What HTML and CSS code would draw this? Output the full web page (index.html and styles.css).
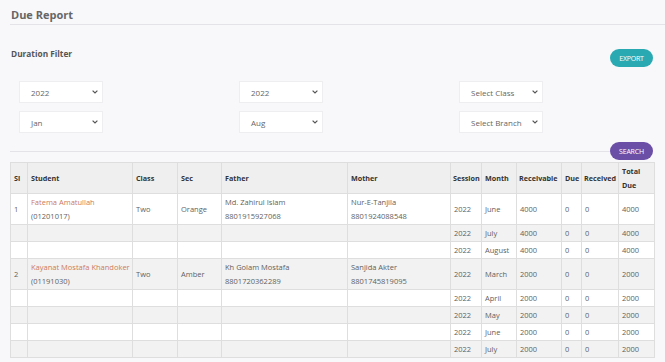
FILE: index.html
```html
<!DOCTYPE html>
<html>
<head>
<meta charset="utf-8">
<link rel="stylesheet" href="styles.css">
</head>
<body>
<div class="page">
  <div class="page-head">Due Report</div>
  <div class="filter-bar">
    <div class="filter-label">Duration Filter</div>
    <button class="btn btn-export">EXPORT</button>
  </div>
  <div class="filters">
    <div class="select"><span>2022</span><svg width="6" height="4" viewBox="0 0 6 4"><path d="M0.6 0.6 L3 3 L5.4 0.6" fill="none" stroke="#555" stroke-width="1.2"/></svg></div>
    <div class="select"><span>2022</span><svg width="6" height="4" viewBox="0 0 6 4"><path d="M0.6 0.6 L3 3 L5.4 0.6" fill="none" stroke="#555" stroke-width="1.2"/></svg></div>
    <div class="select"><span>Select Class</span><svg width="6" height="4" viewBox="0 0 6 4"><path d="M0.6 0.6 L3 3 L5.4 0.6" fill="none" stroke="#555" stroke-width="1.2"/></svg></div>
    <div class="select"><span>Jan</span><svg width="6" height="4" viewBox="0 0 6 4"><path d="M0.6 0.6 L3 3 L5.4 0.6" fill="none" stroke="#555" stroke-width="1.2"/></svg></div>
    <div class="select"><span>Aug</span><svg width="6" height="4" viewBox="0 0 6 4"><path d="M0.6 0.6 L3 3 L5.4 0.6" fill="none" stroke="#555" stroke-width="1.2"/></svg></div>
    <div class="select"><span>Select Branch</span><svg width="6" height="4" viewBox="0 0 6 4"><path d="M0.6 0.6 L3 3 L5.4 0.6" fill="none" stroke="#555" stroke-width="1.2"/></svg></div>
  </div>
  <div class="search-row">
    <div class="divider"></div>
    <button class="btn btn-search">SEARCH</button>
  </div>
  <table class="report">
    <colgroup>
      <col style="width:17px"><col style="width:105px"><col style="width:45px"><col style="width:44px">
      <col style="width:126px"><col style="width:103px"><col style="width:31px"><col style="width:35px">
      <col style="width:45px"><col style="width:20px"><col style="width:37px"><col style="width:36px">
    </colgroup>
    <thead>
      <tr><th>Sl</th><th>Student</th><th>Class</th><th>Sec</th><th>Father</th><th>Mother</th><th class="tight">Session</th><th>Month</th><th class="tight">Receivable</th><th>Due</th><th class="tight">Received</th><th>Total Due</th></tr>
    </thead>
    <tbody>
      <tr><td>1</td><td><span class="name">Fatema Amatullah</span><br>(01201017)</td><td>Two</td><td>Orange</td><td>Md. Zahirul Islam<br>8801915927068</td><td>Nur-E-Tanjila<br>8801924088548</td><td>2022</td><td>June</td><td>4000</td><td>0</td><td>0</td><td>4000</td></tr>
      <tr><td></td><td></td><td></td><td></td><td></td><td></td><td>2022</td><td>July</td><td>4000</td><td>0</td><td>0</td><td>4000</td></tr>
      <tr><td></td><td></td><td></td><td></td><td></td><td></td><td>2022</td><td>August</td><td>4000</td><td>0</td><td>0</td><td>4000</td></tr>
      <tr><td>2</td><td><span class="name">Kayanat Mostafa Khandoker</span><br>(01191030)</td><td>Two</td><td>Amber</td><td>Kh Golam Mostafa<br>8801720362289</td><td>Sanjida Akter<br>8801745819095</td><td>2022</td><td>March</td><td>2000</td><td>0</td><td>0</td><td>2000</td></tr>
      <tr><td></td><td></td><td></td><td></td><td></td><td></td><td>2022</td><td>April</td><td>2000</td><td>0</td><td>0</td><td>2000</td></tr>
      <tr><td></td><td></td><td></td><td></td><td></td><td></td><td>2022</td><td>May</td><td>2000</td><td>0</td><td>0</td><td>2000</td></tr>
      <tr><td></td><td></td><td></td><td></td><td></td><td></td><td>2022</td><td>June</td><td>2000</td><td>0</td><td>0</td><td>2000</td></tr>
      <tr><td></td><td></td><td></td><td></td><td></td><td></td><td>2022</td><td>July</td><td>2000</td><td>0</td><td>0</td><td>2000</td></tr>
    </tbody>
  </table>
</div>
</body>
</html>
```
FILE: styles.css
```css
html, body {
  margin: 0;
  padding: 0;
  background: #f8f8fa;
  font-family: "Open Sans", "Liberation Sans", sans-serif;
  color: #555;
  overflow: hidden;
}
.page {
  padding-left: 10px;
}
.page-head {
  font-size: 11px;
  line-height: 14px;
  font-weight: 700;
  color: #666;
  padding: 8px 0 2px 1px;
  border-bottom: 1px solid #e4e4e8;
}
.filter-bar {
  display: flex;
  justify-content: space-between;
  align-items: flex-start;
  margin-top: 23px;
  padding-right: 12px;
}
.filter-label {
  font-size: 8.3px;
  line-height: 12px;
  font-weight: 700;
  color: #555;
  padding-left: 1px;
}
.btn {
  border: none;
  color: #fff;
  font-family: "Open Sans", "Liberation Sans", sans-serif;
  font-size: 7px;
  height: 18px;
  width: 43px;
  border-radius: 9px;
  padding: 0;
  letter-spacing: -0.2px;
}
.btn-export {
  background: #29aab2;
  margin-top: 1px;
}
.btn-search {
  background: #6b4fa6;
}
.filters {
  display: grid;
  grid-template-columns: repeat(3, 84px);
  column-gap: 136px;
  row-gap: 8px;
  margin-top: 14px;
  padding-left: 9px;
}
.select {
  height: 22px;
  background: #fff;
  border: 1px solid #eeeef1;
  box-sizing: border-box;
  display: flex;
  align-items: center;
  justify-content: space-between;
  padding: 0 4px 0 11px;
  font-size: 8px;
  color: #666;
}
.search-row {
  display: flex;
  align-items: center;
  margin-top: 9px;
  padding-right: 12px;
  height: 18px;
}
.divider {
  flex: 1;
  height: 1px;
  background: #e4e4e8;
}
.report {
  margin-top: 2px;
  border-collapse: collapse;
  table-layout: fixed;
  width: 644px;
  font-size: 7.5px;
  line-height: 14px;
}
.report th, .report td {
  border: 1px solid #dedede;
  padding: 1px 1px 1px 3px;
  text-align: left;
  vertical-align: middle;
  white-space: normal;
  overflow: visible;
}
.report th {
  background: #efefef;
  color: #333;
  font-weight: 700;
  font-size: 7.2px;
}
.report th.tight {
  padding-left: 2px;
  padding-right: 0;
}
.report td {
  color: #5f5f5f;
}
.report tbody tr:nth-child(odd) td {
  background: #fff;
}
.report tbody tr:nth-child(even) td {
  background: #f2f2f2;
}
.name {
  color: #cd7b5c;
}
```
